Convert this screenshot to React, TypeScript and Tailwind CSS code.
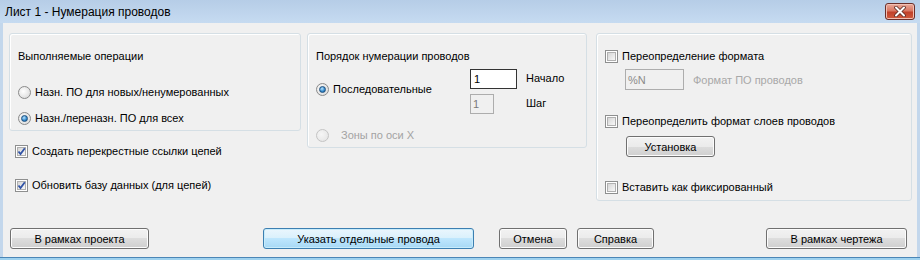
import React from "react";

const Radio = ({ label, checked = false, disabled = false, gap = "ml-[4px]" }: { label: string; checked?: boolean; disabled?: boolean; gap?: string }) => (
  <div className="flex items-center h-[16px]">
    <span
      className={`relative w-[13px] h-[13px] rounded-full border flex items-center justify-center ${
        disabled
          ? "border-[#c4c4c4] bg-[radial-gradient(circle_at_40%_40%,#f6f6f6,#e2e2e2)]"
          : "border-[#8a8a8a] bg-[radial-gradient(circle_at_40%_40%,#ffffff,#d4d4d4)]"
      }`}
    >
      {checked && (
        <span className="w-[7px] h-[7px] rounded-full border border-[#1d4f7d] bg-[radial-gradient(circle_at_40%_35%,#b8e4ff,#2f85c9_60%,#1a5c93)]" />
      )}
    </span>
    <span className={`${gap} ${disabled ? "text-[#a3a3a3]" : "text-black"}`}>{label}</span>
  </div>
);

const Check = ({ label, checked = false }: { label: string; checked?: boolean }) => (
  <div className="flex items-center h-[16px]">
    <span className="w-[13px] h-[13px] border border-[#8e8f8f] bg-white p-[1px] flex">
      <span className="relative flex-1 border border-[#b0b0b0] bg-[linear-gradient(135deg,#d6d6d6,#f8f8f8)]">
        {checked && (
          <svg className="absolute -left-[2px] -top-[2px]" width="11" height="11" viewBox="0 0 11 11">
            <path d="M2.5 5.5 L4.5 8 L8.8 2.2" fill="none" stroke="#3153a6" strokeWidth="1.8" />
          </svg>
        )}
      </span>
    </span>
    <span className="ml-[4px] text-black">{label}</span>
  </div>
);

const Btn = ({ label, w, focused = false, cls = "" }: { label: string; w: string; focused?: boolean; cls?: string }) => (
  <div
    className={`${w} ${cls} h-[21px] rounded-[3px] border flex items-center justify-center text-black ${
      focused
        ? "border-[#3c7fb1] bg-[linear-gradient(#eaf6fd_0%,#d9f0fc_50%,#bee6fd_50%,#a7d9f5_100%)] shadow-[inset_0_0_0_1px_#c8ecfb]"
        : "border-[#707070] bg-[linear-gradient(#f2f2f2_0%,#ebebeb_50%,#dddddd_50%,#cfcfcf_100%)] shadow-[inset_0_0_0_1px_#fcfcfc]"
    }`}
  >
    {label}
  </div>
);

const Group = ({ h, w, children }: { h: string; w: string; children: React.ReactNode }) => (
  <div className={`${h} ${w} rounded-[3px] border border-[#d5dfe5] shadow-[inset_1px_1px_0_#ffffff] pl-[8px] pt-[15px]`}>
    {children}
  </div>
);

export default function App() {
  return (
    <div className="w-[920px] h-[260px] flex flex-col bg-[#c3d7ec] font-['Liberation_Sans',Arial,sans-serif] text-[11px] leading-[14px] overflow-hidden">
      {/* заголовок */}
      <div className="h-[23px] flex items-center pl-[5px] pr-[5px] bg-[linear-gradient(#b6cde7,#c6dbf1)]">
        <span className="text-[12px] text-black">Лист 1 - Нумерация проводов</span>
        <div className="ml-auto w-[30px] h-[17px] rounded-[3px] border border-[#6b2f2a] bg-[linear-gradient(#e9a99b_0%,#d97762_45%,#c0412b_55%,#d05b3e_100%)] shadow-[inset_0_0_0_1px_#f1c0b4] flex items-center justify-center">
          <svg width="14" height="11" viewBox="0 0 14 11">
            <path d="M3 1.5 L11 9.5 M11 1.5 L3 9.5" stroke="#5a2a24" strokeWidth="3.6" strokeLinecap="round" />
            <path d="M3 1.5 L11 9.5 M11 1.5 L3 9.5" stroke="#ffffff" strokeWidth="2" strokeLinecap="round" />
          </svg>
        </div>
      </div>

      {/* содержимое */}
      <div className="mx-[3px] h-[234px] bg-[#f0f0f0] flex flex-col pl-[6px] pt-[10px]">
        <div className="flex h-[195px]">
          {/* левая колонка */}
          <div className="w-[292px] flex flex-col">
            <Group h="h-[98px]" w="w-[292px]">
              <div className="h-[14px]">Выполняемые операции</div>
              <div className="mt-[21px] flex flex-col gap-[10px]">
                <Radio label="Назн. ПО для новых/ненумерованных" />
                <Radio label="Назн./переназн. ПО для всех" checked />
              </div>
            </Group>
            <div className="pl-[6px] mt-[12px] flex flex-col gap-[18px]">
              <Check label="Создать перекрестные ссылки цепей" checked />
              <Check label="Обновить базу данных (для цепей)" checked />
            </div>
          </div>

          {/* средняя колонка */}
          <div className="ml-[6px]">
            <Group h="h-[115px]" w="w-[280px]">
              <div className="h-[14px]">Порядок нумерации проводов</div>
              <div className="flex mt-[6px]">
                <div className="w-[154px] pt-[12px]">
                  <Radio label="Последовательные" checked />
                </div>
                <div className="flex flex-col">
                  <div className="flex items-center">
                    <div className="w-[47px] h-[20px] border border-[#333333] bg-white pl-[3px] flex items-center">1</div>
                    <span className="ml-[9px] -mt-[3px]">Начало</span>
                  </div>
                  <div className="flex items-center mt-[5px]">
                    <div className="w-[24px] h-[20px] border border-[#adadad] bg-[#f0f0f0] pl-[2px] flex items-center text-[#7a7a7a]">1</div>
                    <span className="ml-[32px] -mt-[3px]">Шаг</span>
                  </div>
                </div>
              </div>
              <div className="mt-[13px]">
                <Radio label="Зоны по оси X" disabled gap="ml-[12px]" />
              </div>
            </Group>
          </div>

          {/* правая колонка */}
          <div className="ml-[9px]">
            <Group h="h-[168px]" w="w-[316px]">
              <div className="-mt-[1px]">
                <Check label="Переопределение формата" />
              </div>
              <div className="flex items-center mt-[5px] ml-[20px]">
                <div className="w-[59px] h-[21px] border border-[#adadad] bg-[#f0f0f0] pl-[2px] flex items-center text-[#8a8a8a]">%N</div>
                <span className="ml-[9px] text-[#a8a8a8]">Формат ПО проводов</span>
              </div>
              <div className="mt-[23px]">
                <Check label="Переопределить формат слоев проводов" />
              </div>
              <Btn label="Установка" w="w-[89px]" cls="ml-[21px] mt-[7px]" />
              <div className="mt-[22px]">
                <Check label="Вставить как фиксированный" />
              </div>
            </Group>
          </div>
        </div>

        {/* кнопки */}
        <div className="flex pl-[1px]">
          <Btn label="В рамках проекта" w="w-[139px]" />
          <Btn label="Указать отдельные провода" w="w-[211px]" focused cls="ml-[114px]" />
          <Btn label="Отмена" w="w-[68px]" cls="ml-[25px]" />
          <Btn label="Справка" w="w-[77px]" cls="ml-[10px]" />
          <Btn label="В рамках чертежа" w="w-[141px]" cls="ml-[112px]" />
        </div>
      </div>
      <div className="h-[1px] bg-[#4b86b6]" />
      <div className="flex-1 bg-[#9fd2ef]" />
    </div>
  );
}
